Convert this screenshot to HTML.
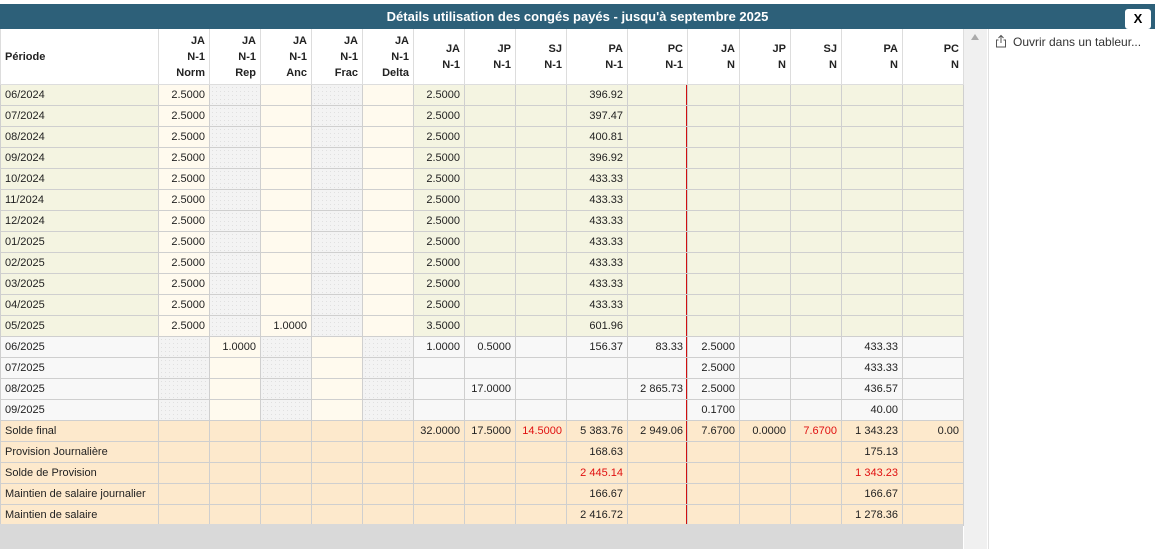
<!DOCTYPE html>
<html><head><meta charset="utf-8"><style>
body{margin:0;width:1155px;height:549px;position:relative;overflow:hidden;background:#fff;font-family:"Liberation Sans",Tahoma,sans-serif;font-size:11px;color:#222}
.top{position:absolute;left:0;top:0;width:1155px;height:4px;background:#fff}
.title{position:absolute;left:0;top:4px;width:1155px;height:25px;background:#2d6079;color:#fff;font-weight:bold;font-size:13px;text-align:center;line-height:25px}
.x{position:absolute;right:4px;top:5px;width:26px;height:20px;background:#fff;border-radius:3px;color:#000;font-weight:bold;font-size:13px;line-height:20px;text-align:center}
table{position:absolute;left:0;top:29px;border-collapse:collapse;table-layout:fixed;width:963px}
td{height:20px;padding:0 4px;text-align:right;border:1px solid #cfcfcf;border-top:none;white-space:nowrap;overflow:hidden;line-height:20px}
td:first-child{text-align:left;padding-left:4px}
tr.h td{height:55px;background:#fff;font-weight:bold;line-height:16px;vertical-align:middle;border-bottom:1px solid #999;border-color:#ddd}
.o{background:#f4f4e1}.c{background:#fffaee}.d{background:#f3f3f3 radial-gradient(#e0e0e0 0.6px,transparent 0.7px) 0 0/4px 4px}.w{background:#f8f8f8}.p{background:#fde9cc}
.rl{box-shadow:inset -1px 0 0 #d01010}
.r{color:#e01010}
.gray{position:absolute;left:0;top:524px;width:963px;height:25px;background:#d9d9d9}
.sb{position:absolute;left:964px;top:29px;width:23px;height:520px;background:#f0f0f0}
.sb:before{content:"";position:absolute;left:7px;top:5px;border:4px solid transparent;border-bottom:6px solid #aaa;border-top:none}
.side{position:absolute;left:988px;top:29px;width:167px;height:520px;background:#fff;border-left:1px solid #e0e0e0}
.side span{position:absolute;left:24px;top:6px;font-size:12px;color:#333}
</style></head><body>
<div class="top"></div>
<div class="title">Détails utilisation des congés payés - jusqu'à septembre 2025<div class="x">X</div></div>
<table>
<colgroup><col style="width:158px"><col style="width:51px"><col style="width:51px"><col style="width:51px"><col style="width:51px"><col style="width:51px"><col style="width:51px"><col style="width:51px"><col style="width:51px"><col style="width:61px"><col style="width:60px"><col style="width:52px"><col style="width:51px"><col style="width:51px"><col style="width:61px"><col style="width:61px"></colgroup>
<tr class="h"><td>Période</td><td>JA<br>N-1<br>Norm</td><td>JA<br>N-1<br>Rep</td><td>JA<br>N-1<br>Anc</td><td>JA<br>N-1<br>Frac</td><td>JA<br>N-1<br>Delta</td><td>JA<br>N-1</td><td>JP<br>N-1</td><td>SJ<br>N-1</td><td>PA<br>N-1</td><td>PC<br>N-1</td><td>JA<br>N</td><td>JP<br>N</td><td>SJ<br>N</td><td>PA<br>N</td><td>PC<br>N</td></tr>
<tr><td class="o">06/2024</td><td class="c">2.5000</td><td class="d"></td><td class="c"></td><td class="d"></td><td class="c"></td><td class="o">2.5000</td><td class="o"></td><td class="o"></td><td class="o">396.92</td><td class="o rl"></td><td class="o"></td><td class="o"></td><td class="o"></td><td class="o"></td><td class="o"></td></tr>
<tr><td class="o">07/2024</td><td class="c">2.5000</td><td class="d"></td><td class="c"></td><td class="d"></td><td class="c"></td><td class="o">2.5000</td><td class="o"></td><td class="o"></td><td class="o">397.47</td><td class="o rl"></td><td class="o"></td><td class="o"></td><td class="o"></td><td class="o"></td><td class="o"></td></tr>
<tr><td class="o">08/2024</td><td class="c">2.5000</td><td class="d"></td><td class="c"></td><td class="d"></td><td class="c"></td><td class="o">2.5000</td><td class="o"></td><td class="o"></td><td class="o">400.81</td><td class="o rl"></td><td class="o"></td><td class="o"></td><td class="o"></td><td class="o"></td><td class="o"></td></tr>
<tr><td class="o">09/2024</td><td class="c">2.5000</td><td class="d"></td><td class="c"></td><td class="d"></td><td class="c"></td><td class="o">2.5000</td><td class="o"></td><td class="o"></td><td class="o">396.92</td><td class="o rl"></td><td class="o"></td><td class="o"></td><td class="o"></td><td class="o"></td><td class="o"></td></tr>
<tr><td class="o">10/2024</td><td class="c">2.5000</td><td class="d"></td><td class="c"></td><td class="d"></td><td class="c"></td><td class="o">2.5000</td><td class="o"></td><td class="o"></td><td class="o">433.33</td><td class="o rl"></td><td class="o"></td><td class="o"></td><td class="o"></td><td class="o"></td><td class="o"></td></tr>
<tr><td class="o">11/2024</td><td class="c">2.5000</td><td class="d"></td><td class="c"></td><td class="d"></td><td class="c"></td><td class="o">2.5000</td><td class="o"></td><td class="o"></td><td class="o">433.33</td><td class="o rl"></td><td class="o"></td><td class="o"></td><td class="o"></td><td class="o"></td><td class="o"></td></tr>
<tr><td class="o">12/2024</td><td class="c">2.5000</td><td class="d"></td><td class="c"></td><td class="d"></td><td class="c"></td><td class="o">2.5000</td><td class="o"></td><td class="o"></td><td class="o">433.33</td><td class="o rl"></td><td class="o"></td><td class="o"></td><td class="o"></td><td class="o"></td><td class="o"></td></tr>
<tr><td class="o">01/2025</td><td class="c">2.5000</td><td class="d"></td><td class="c"></td><td class="d"></td><td class="c"></td><td class="o">2.5000</td><td class="o"></td><td class="o"></td><td class="o">433.33</td><td class="o rl"></td><td class="o"></td><td class="o"></td><td class="o"></td><td class="o"></td><td class="o"></td></tr>
<tr><td class="o">02/2025</td><td class="c">2.5000</td><td class="d"></td><td class="c"></td><td class="d"></td><td class="c"></td><td class="o">2.5000</td><td class="o"></td><td class="o"></td><td class="o">433.33</td><td class="o rl"></td><td class="o"></td><td class="o"></td><td class="o"></td><td class="o"></td><td class="o"></td></tr>
<tr><td class="o">03/2025</td><td class="c">2.5000</td><td class="d"></td><td class="c"></td><td class="d"></td><td class="c"></td><td class="o">2.5000</td><td class="o"></td><td class="o"></td><td class="o">433.33</td><td class="o rl"></td><td class="o"></td><td class="o"></td><td class="o"></td><td class="o"></td><td class="o"></td></tr>
<tr><td class="o">04/2025</td><td class="c">2.5000</td><td class="d"></td><td class="c"></td><td class="d"></td><td class="c"></td><td class="o">2.5000</td><td class="o"></td><td class="o"></td><td class="o">433.33</td><td class="o rl"></td><td class="o"></td><td class="o"></td><td class="o"></td><td class="o"></td><td class="o"></td></tr>
<tr><td class="o">05/2025</td><td class="c">2.5000</td><td class="d"></td><td class="c">1.0000</td><td class="d"></td><td class="c"></td><td class="o">3.5000</td><td class="o"></td><td class="o"></td><td class="o">601.96</td><td class="o rl"></td><td class="o"></td><td class="o"></td><td class="o"></td><td class="o"></td><td class="o"></td></tr>
<tr><td class="w">06/2025</td><td class="d"></td><td class="c">1.0000</td><td class="d"></td><td class="c"></td><td class="d"></td><td class="w">1.0000</td><td class="w">0.5000</td><td class="w"></td><td class="w">156.37</td><td class="w rl">83.33</td><td class="w">2.5000</td><td class="w"></td><td class="w"></td><td class="w">433.33</td><td class="w"></td></tr>
<tr><td class="w">07/2025</td><td class="d"></td><td class="c"></td><td class="d"></td><td class="c"></td><td class="d"></td><td class="w"></td><td class="w"></td><td class="w"></td><td class="w"></td><td class="w rl"></td><td class="w">2.5000</td><td class="w"></td><td class="w"></td><td class="w">433.33</td><td class="w"></td></tr>
<tr><td class="w">08/2025</td><td class="d"></td><td class="c"></td><td class="d"></td><td class="c"></td><td class="d"></td><td class="w"></td><td class="w">17.0000</td><td class="w"></td><td class="w"></td><td class="w rl">2 865.73</td><td class="w">2.5000</td><td class="w"></td><td class="w"></td><td class="w">436.57</td><td class="w"></td></tr>
<tr><td class="w">09/2025</td><td class="d"></td><td class="c"></td><td class="d"></td><td class="c"></td><td class="d"></td><td class="w"></td><td class="w"></td><td class="w"></td><td class="w"></td><td class="w rl"></td><td class="w">0.1700</td><td class="w"></td><td class="w"></td><td class="w">40.00</td><td class="w"></td></tr>
<tr><td class="p">Solde final</td><td class="p"></td><td class="p"></td><td class="p"></td><td class="p"></td><td class="p"></td><td class="p">32.0000</td><td class="p">17.5000</td><td class="p r">14.5000</td><td class="p">5 383.76</td><td class="p rl">2 949.06</td><td class="p">7.6700</td><td class="p">0.0000</td><td class="p r">7.6700</td><td class="p">1 343.23</td><td class="p">0.00</td></tr>
<tr><td class="p">Provision Journalière</td><td class="p"></td><td class="p"></td><td class="p"></td><td class="p"></td><td class="p"></td><td class="p"></td><td class="p"></td><td class="p"></td><td class="p">168.63</td><td class="p rl"></td><td class="p"></td><td class="p"></td><td class="p"></td><td class="p">175.13</td><td class="p"></td></tr>
<tr><td class="p">Solde de Provision</td><td class="p"></td><td class="p"></td><td class="p"></td><td class="p"></td><td class="p"></td><td class="p"></td><td class="p"></td><td class="p"></td><td class="p r">2 445.14</td><td class="p rl"></td><td class="p"></td><td class="p"></td><td class="p"></td><td class="p r">1 343.23</td><td class="p"></td></tr>
<tr><td class="p">Maintien de salaire journalier</td><td class="p"></td><td class="p"></td><td class="p"></td><td class="p"></td><td class="p"></td><td class="p"></td><td class="p"></td><td class="p"></td><td class="p">166.67</td><td class="p rl"></td><td class="p"></td><td class="p"></td><td class="p"></td><td class="p">166.67</td><td class="p"></td></tr>
<tr><td class="p">Maintien de salaire</td><td class="p"></td><td class="p"></td><td class="p"></td><td class="p"></td><td class="p"></td><td class="p"></td><td class="p"></td><td class="p"></td><td class="p">2 416.72</td><td class="p rl"></td><td class="p"></td><td class="p"></td><td class="p"></td><td class="p">1 278.36</td><td class="p"></td></tr>
</table>
<div class="gray"></div>
<div class="sb"></div>
<div class="side"><svg style="position:absolute;left:5px;top:5px" width="14" height="14" viewBox="0 0 14 14" fill="none" stroke="#555" stroke-width="1"><path d="M4.5 6H2.5V13H11.5V6H9.5"/><path d="M7 9V1.5M4.5 4L7 1.5L9.5 4"/></svg><span>Ouvrir dans un tableur...</span></div>
</body></html>
